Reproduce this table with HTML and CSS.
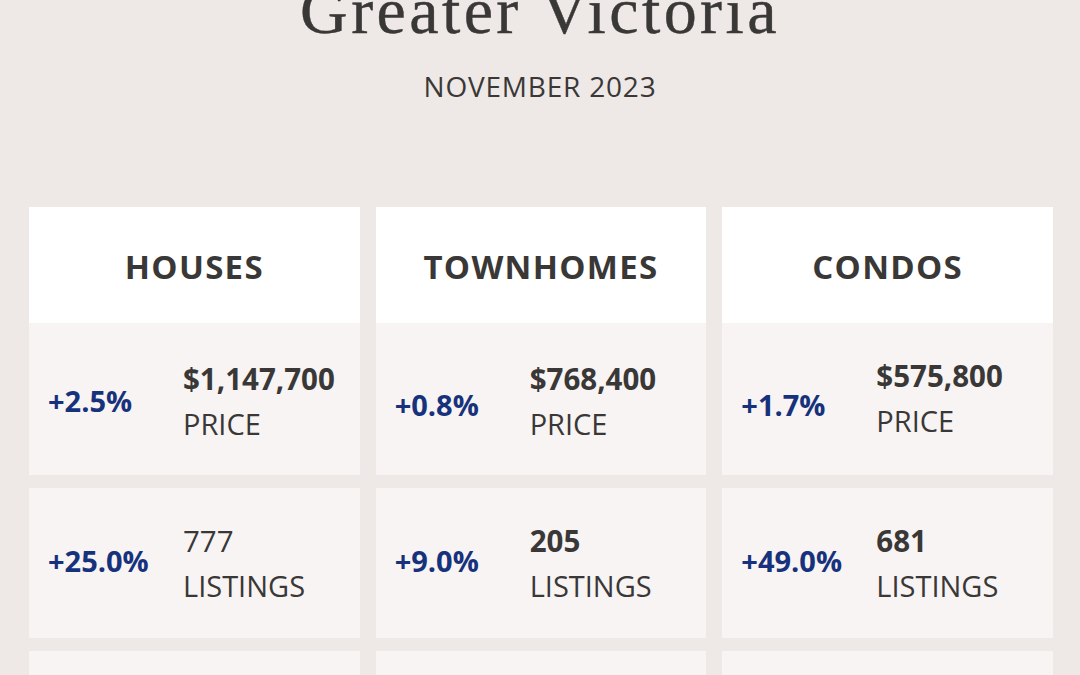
FILE: index.html
```html
<!DOCTYPE html>
<html lang="en">
<head>
<meta charset="utf-8">
<title>Greater Victoria — November 2023</title>
<link rel="stylesheet" href="styles.css">
</head>
<body>
<header class="masthead">
  <h1 class="title">Greater Victoria</h1>
  <p class="subtitle">NOVEMBER 2023</p>
</header>
<main class="board">
  <section class="column">
    <div class="card">
      <h2 class="card-head">HOUSES</h2>
      <div class="cell price first">
        <span class="pct">+2.5%</span>
        <div class="figure"><span class="value">$1,147,700</span><span class="label">PRICE</span></div>
      </div>
    </div>
    <div class="cell">
      <span class="pct">+25.0%</span>
      <div class="figure"><span class="value light">777</span><span class="label">LISTINGS</span></div>
    </div>
    <div class="cell"></div>
  </section>
  <section class="column">
    <div class="card">
      <h2 class="card-head">TOWNHOMES</h2>
      <div class="cell price">
        <span class="pct">+0.8%</span>
        <div class="figure"><span class="value">$768,400</span><span class="label">PRICE</span></div>
      </div>
    </div>
    <div class="cell">
      <span class="pct">+9.0%</span>
      <div class="figure"><span class="value">205</span><span class="label">LISTINGS</span></div>
    </div>
    <div class="cell"></div>
  </section>
  <section class="column">
    <div class="card">
      <h2 class="card-head">CONDOS</h2>
      <div class="cell price shift">
        <span class="pct">+1.7%</span>
        <div class="figure"><span class="value">$575,800</span><span class="label">PRICE</span></div>
      </div>
    </div>
    <div class="cell">
      <span class="pct">+49.0%</span>
      <div class="figure"><span class="value">681</span><span class="label">LISTINGS</span></div>
    </div>
    <div class="cell"></div>
  </section>
</main>
</body>
</html>
```

FILE: styles.css
```css
html, body {
  margin: 0;
  padding: 0;
}
body {
  background: #eee9e6;
  color: #3a3837;
  font-family: "Open Sans", "Liberation Sans", sans-serif;
  width: 1080px;
  height: 675px;
  overflow: hidden;
}
.masthead {
  display: flow-root;
  text-align: center;
  height: 207px;
}
.title {
  margin: -22px 0 0;
  font-family: "Liberation Serif", "DejaVu Serif", serif;
  font-weight: 400;
  font-size: 66px;
  line-height: 1;
  letter-spacing: 3.4px;
  color: #3a3837;
  -webkit-text-stroke: 0.4px #3a3837;
}
.subtitle {
  margin: 28px 0 0;
  font-size: 28px;
  line-height: 1;
  letter-spacing: 0.8px;
}
.board {
  display: grid;
  grid-template-columns: repeat(3, 1fr);
  column-gap: 16px;
  padding: 0 27px 0 29px;
}
.column {
  display: flex;
  flex-direction: column;
  gap: 13px;
}
.card {
  display: flex;
  flex-direction: column;
}
.card-head {
  margin: 0;
  height: 116px;
  background: #ffffff;
  display: flex;
  align-items: center;
  justify-content: center;
  font-size: 33px;
  font-weight: 700;
  letter-spacing: 1.3px;
  padding-top: 2px;
  box-sizing: border-box;
}
.cell {
  background: #f7f4f3;
  height: 150px;
  display: grid;
  grid-template-columns: 135px 1fr;
  align-items: center;
  padding-left: 19px;
  box-sizing: border-box;
}
.pct {
  color: #17327c;
  font-weight: 700;
  font-size: 29px;
  padding-bottom: 6px;
}
.figure {
  display: flex;
  flex-direction: column;
}
.cell.price {
  height: 152px;
}
.price .figure {
  padding-top: 4px;
}
.price .pct {
  padding-top: 10px;
  padding-bottom: 0;
}
.price.first .pct {
  padding-top: 2px;
}
.price.shift .figure {
  padding-top: 0;
  padding-bottom: 2px;
}
.value {
  font-weight: 700;
  font-size: 29.5px;
  line-height: 45px;
}
.value.light {
  font-weight: 400;
}
.label {
  font-size: 29px;
  line-height: 45px;
}
```
